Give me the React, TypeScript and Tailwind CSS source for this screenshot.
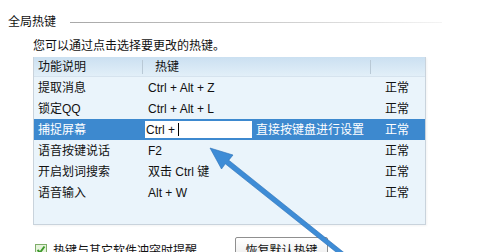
const font = { fontFamily: '"Liberation Sans", "Noto Sans CJK SC", sans-serif' };

const rows = [
  { name: "提取消息", key: "Ctrl + Alt + Z" },
  { name: "锁定QQ", key: "Ctrl + Alt + L" },
  { name: "捕捉屏幕", key: "", active: true },
  { name: "语音按键说话", key: "F2" },
  { name: "开启划词搜索", key: "双击 Ctrl 键" },
  { name: "语音输入", key: "Alt + W" },
];

export default function App() {
  return (
    <div
      className="relative w-[492px] h-[252px] overflow-hidden bg-white text-[12px] leading-[16px] text-[#111]"
      style={font}
    >
      {/* section title */}
      <div className="flex items-center pl-2 pt-[14px] pr-[50px]">
        <span>全局热键</span>
        <div className="flex-1 ml-[14px] h-px bg-gradient-to-r from-[#a8a8a8] via-[#c8c8c8] to-[#f4f4f4]" />
      </div>

      <div className="pl-[33px] pt-[8px]">您可以通过点击选择要更改的热键。</div>

      {/* table */}
      <div className="ml-[33px] mt-[3px] w-[393px] h-[168px] bg-[#eaf4fb] border border-[#c9d3dc] border-t-0 shadow-[1px_1px_2px_rgba(0,0,0,0.05)]">
        <div className="flex h-[20px] items-center bg-gradient-to-b from-[#cbe0f1] to-[#e2eff8] border-b border-[#d6e3ee]">
          <div className="w-[108px] pl-[4px]">功能说明</div>
          <div className="w-px h-[14px] bg-[#b9c9d6]" />
          <div className="w-[227px] pl-[12px]">热键</div>
          <div className="w-px h-[14px] bg-[#b9c9d6]" />
          <div className="flex-1" />
        </div>
        {rows.map((r) => (
          <div
            key={r.name}
            className={
              r.active
                ? "flex h-[21px] items-center bg-[#3d89cf] text-white"
                : "flex h-[21px] items-center"
            }
          >
            <div className="w-[109px] pl-[4px]">{r.name}</div>
            {r.active ? (
              <div className="w-[228px] flex items-center">
                <div className="ml-[2px] w-[107px] h-[17px] bg-white text-[#111] flex items-center pl-[1px]">
                  Ctrl +
                  <span className="ml-[3px] w-px h-[13px] bg-black" />
                </div>
                <span className="ml-[4px]">直接按键盘进行设置</span>
              </div>
            ) : (
              <div className="w-[228px] pl-[5px]">{r.key}</div>
            )}
            <div className="flex-1 pl-[14px]">正常</div>
          </div>
        ))}
      </div>

      {/* bottom options */}
      <div className="flex items-start pl-[35px] pt-[12px]">
        <div className="mt-[7px] w-[12px] h-[12px] border border-[#7fae6a] bg-[#e6f3dc] flex items-center justify-center">
          <svg width="10" height="10" viewBox="0 0 10 10">
            <path d="M1.5 5 L4 7.5 L8.5 1.5" stroke="#3d9a2c" strokeWidth="2" fill="none" />
          </svg>
        </div>
        <span className="ml-[6px] mt-[6px]">热键与其它软件冲突时提醒</span>
        <div className="ml-[38px] w-[93px] h-[22px] border border-[#8f8f8f] rounded-[2px] bg-gradient-to-b from-white to-[#ececec] flex justify-center pt-[5px]">
          恢复默认热键
        </div>
      </div>

      {/* annotation arrow */}
      <svg className="absolute left-0 top-0 pointer-events-none" width="492" height="252" viewBox="0 0 492 252">
        <polygon
          points="210,148 233,155 228.8,160.2 347,255 343.5,258 225.3,163.8 221.5,169"
          fill="#3e8cd6"
          stroke="#2a6fb5"
          strokeWidth="0.6"
          strokeLinejoin="round"
        />
      </svg>
    </div>
  );
}
